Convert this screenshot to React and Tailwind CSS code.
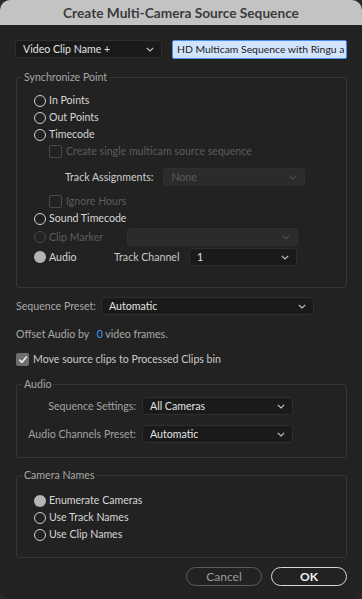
import React from "react"

/* ---------- small pieces ---------- */

function Chevron({ dim }) {
  return (
    <svg width="8" height="5" viewBox="0 0 8 5" className="shrink-0">
      <path
        d="M0.8 0.8 L4 4 L7.2 0.8"
        fill="none"
        stroke={dim ? "#4d4d4d" : "#c8c8c8"}
        strokeWidth="1.1"
      />
    </svg>
  )
}

function Select({ value, className = "", disabled }) {
  return (
    <div
      className={
        "flex items-center justify-between rounded-[3px] border px-[7px] " +
        (disabled
          ? "border-[#2f2f2f] bg-[#2b2b2b] text-[#5a5a5a] "
          : "border-[#2e2e2e] bg-[#1a1a1a] text-[#e2e2e2] ") +
        className
      }
    >
      <span className="truncate">{value}</span>
      <Chevron dim={disabled} />
    </div>
  )
}

function Radio({ label, checked, disabled, className = "" }) {
  return (
    <div className={"flex h-[17px] items-center gap-[3px] " + className}>
      {checked ? (
        <span className="h-[12px] w-[12px] shrink-0 rounded-full bg-[#b4b4b4]" />
      ) : (
        <span
          className={
            "h-[12px] w-[12px] shrink-0 rounded-full border-[1.5px] " +
            (disabled ? "border-[#4a4a4a]" : "border-[#cfcfcf]")
          }
        />
      )}
      <span className={disabled ? "text-[#5c5c5c]" : "text-[#d6d6d6]"}>{label}</span>
    </div>
  )
}

function Checkbox({ label, checked, disabled, className = "" }) {
  return (
    <div className={"flex h-[17px] items-center gap-[4px] " + className}>
      {checked ? (
        <span className="flex h-[13px] w-[13px] shrink-0 items-center justify-center rounded-[2px] bg-[#6e6e6e]">
          <svg width="10" height="9" viewBox="0 0 10 9">
            <path d="M1.3 4.6 L3.9 7.2 L8.8 1.4" fill="none" stroke="#ededed" strokeWidth="1.6" />
          </svg>
        </span>
      ) : (
        <span className="h-[13px] w-[13px] shrink-0 rounded-[2px] border border-[#4a4a4a]" />
      )}
      <span className={disabled ? "text-[#5c5c5c]" : "text-[#c9c9c9]"}>{label}</span>
    </div>
  )
}

// fieldset box; padding goes on the inner div so the legend stays at the left
function Group({ legend, className = "", inner = "", children }) {
  return (
    <fieldset className={"ml-px rounded-[3px] border border-[#363636] " + className}>
      <legend className="ml-[5px] px-[2px] leading-[14px] text-[#a6a6a6]">{legend}</legend>
      <div className={inner}>{children}</div>
    </fieldset>
  )
}

/* ---------- dialog ---------- */

export default function App() {
  return (
    <div className="h-[599px] w-[362px] bg-[#2a2a2a] font-[Lato,'Noto_Sans',sans-serif] text-[10.6px] leading-[17px]">
      <div className="flex h-full flex-col overflow-hidden rounded-[10px] bg-[#222222]">
        {/* title bar */}
        <div className="flex h-[25px] shrink-0 items-center justify-center bg-[#c3c3c3]">
          <span className="text-[13.7px] font-bold text-[#3c3c3c]">
            Create Multi-Camera Source Sequence
          </span>
        </div>

        <div className="flex flex-col px-[15px] pt-[15px]">
          {/* name row */}
          <div className="flex items-start gap-[10px]">
            <Select value="Video Clip Name +" className="h-[18px] w-[147px] text-[#d8d8d8]" />
            <div className="flex h-[19px] flex-1 items-center overflow-hidden whitespace-nowrap rounded-[2px] border-[1.5px] border-[#4a8df3] bg-[#d2e3fc] pl-[4px] text-[10.4px] text-[#1b1b1b]">
              HD Multicam Sequence with Ringu a
            </div>
          </div>

          {/* synchronize point */}
          <Group legend="Synchronize Point" className="mt-[11px]" inner="pb-[21px] pl-[17px] pt-[8px]">
            <Radio label="In Points" />
            <Radio label="Out Points" />
            <Radio label="Timecode" />
            <Checkbox label="Create single multicam source sequence" disabled className="ml-[15px]" />
            <div className="mt-[8px] flex items-center gap-[10px] pl-[31px]">
              <span className="text-[#cfcfcf]">Track Assignments:</span>
              <Select value="None" disabled className="h-[18px] w-[142px]" />
            </div>
            <Checkbox label="Ignore Hours" disabled className="ml-[15px] mt-[7px]" />
            <Radio label="Sound Timecode" />
            <div className="mt-px flex h-[18px] items-center">
              <Radio label="Clip Marker" disabled className="w-[93px]" />
              <Select value="" disabled className="h-[18px] w-[171px]" />
            </div>
            <div className="mt-[2px] flex h-[18px] items-center">
              <Radio label="Audio" checked className="w-[80px]" />
              <span className="w-[75px] text-[#c9c9c9]">Track Channel</span>
              <Select value="1" className="h-[18px] w-[108px]" />
            </div>
          </Group>

          {/* sequence preset */}
          <div className="ml-px mt-[9px] flex items-center gap-[5px]">
            <span className="text-[#a9a9a9]">Sequence Preset:</span>
            <Select value="Automatic" className="h-[18px] w-[213px]" />
          </div>

          <div className="ml-px mt-[11px] text-[#a9a9a9]">
            Offset Audio by <span className="ml-[5px] text-[#3d9af2]">0</span>{" "}
            <span>video frames.</span>
          </div>

          <Checkbox label="Move source clips to Processed Clips bin" checked className="ml-px mt-[8px]" />

          {/* audio */}
          <Group legend="Audio" className="mt-[9px]" inner="pb-[14px] pt-[6px]">
            <div className="flex items-center">
              <span className="w-[120px] pr-px text-right text-[#a3a3a3]">Sequence Settings:</span>
              <Select value="All Cameras" className="ml-[5px] h-[18px] w-[151px]" />
            </div>
            <div className="mt-[10px] flex items-center">
              <span className="w-[120px] pr-px text-right text-[#a3a3a3]">Audio Channels Preset:</span>
              <Select value="Automatic" className="ml-[5px] h-[18px] w-[151px]" />
            </div>
          </Group>

          {/* camera names */}
          <Group legend="Camera Names" className="mt-[10px]" inner="pb-[14px] pl-[17px] pt-[10px]">
            <Radio label="Enumerate Cameras" checked />
            <Radio label="Use Track Names" />
            <Radio label="Use Clip Names" />
          </Group>

          {/* buttons */}
          <div className="mt-[9px] flex justify-end gap-[9px]">
            <button className="h-[19px] w-[76px] rounded-full border-[1.5px] border-[#5c5c5c] text-[12px] text-[#9c9c9c]">
              Cancel
            </button>
            <button className="h-[19px] w-[76px] rounded-full border-[1.5px] border-[#d6d6d6] text-[12px] font-bold text-[#f2f2f2]">
              OK
            </button>
          </div>
        </div>
      </div>
    </div>
  )
}
